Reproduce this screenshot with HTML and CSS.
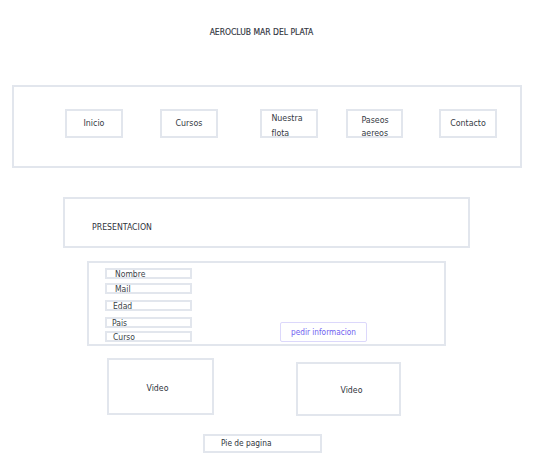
FILE: index.html
```html
<!DOCTYPE html>
<html lang="es">
<head>
<meta charset="utf-8">
<title>Aeroclub Mar del Plata</title>
<link rel="stylesheet" href="styles.css">
</head>
<body>
  <h1 class="title">AEROCLUB MAR DEL PLATA</h1>

  <nav class="nav">
    <a class="nav-item nav-item--inicio"><span>Inicio</span></a>
    <a class="nav-item nav-item--cursos"><span>Cursos</span></a>
    <a class="nav-item nav-item--flota nav-item--multi"><span>Nuestra<br>flota</span></a>
    <a class="nav-item nav-item--paseos nav-item--multi"><span>Paseos<br>aereos</span></a>
    <a class="nav-item nav-item--contacto"><span>Contacto</span></a>
  </nav>

  <section class="presentation">PRESENTACION</section>

  <form class="form">
    <div class="fields">
      <div class="field field--nombre">Nombre</div>
      <div class="field field--mail">Mail</div>
      <div class="field field--edad">Edad</div>
      <div class="field field--pais">Pais</div>
      <div class="field field--curso">Curso</div>
    </div>
    <button type="button" class="btn">pedir informacion</button>
  </form>

  <div class="videos">
    <div class="video video--one">Video</div>
    <div class="video video--two">Video</div>
  </div>

  <footer class="footer">Pie de pagina</footer>
</body>
</html>
```

FILE: styles.css
```css
* {
  box-sizing: border-box;
}

body {
  margin: 0;
  font-family: "DejaVu Sans Condensed", "DejaVu Sans", sans-serif;
  font-stretch: condensed;
  color: #2f343d;
  background: #ffffff;
}

.title {
  margin: 0;
  padding: 27px 17px 0 0;
  font-size: 8.5px;
  line-height: 10px;
  font-weight: 400;
  text-align: center;
  -webkit-text-stroke: 0.15px #2f343d;
}

.nav {
  display: flex;
  align-items: flex-start;
  width: 510px;
  height: 83px;
  margin: 48px 0 0 12px;
  padding: 22px 0 0 51px;
  border: 2px solid #e2e6ed;
}

.nav-item {
  display: flex;
  align-items: center;
  justify-content: center;
  width: 58px;
  height: 29px;
  border: 2px solid #e2e6ed;
  font-size: 8.8px;
  line-height: 11px;
  color: #353a44;
}

.nav-item--multi {
  align-items: flex-start;
}

.nav-item--multi span {
  text-align: left;
}

.nav-item--cursos { margin-left: 37px; }
.nav-item--flota { margin-left: 42px; }
.nav-item--flota span { line-height: 15px; margin-right: 4px; }
.nav-item--paseos { margin-left: 28px; width: 57px; }
.nav-item--paseos span { line-height: 13px; padding-top: 3px; margin-left: 1px; }
.nav-item--contacto { margin-left: 36px; }

.presentation {
  width: 407px;
  height: 51px;
  margin: 29px 0 0 63px;
  padding: 23px 0 0 27px;
  border: 2px solid #e2e6ed;
  font-size: 8.7px;
  line-height: 10px;
}

.form {
  display: flex;
  align-items: flex-end;
  gap: 88px;
  width: 359px;
  height: 85px;
  margin: 13px 0 0 87px;
  padding: 0 0 2px 16px;
  border: 2px solid #e2e6ed;
}

.fields {
  display: flex;
  flex-direction: column;
}

.field {
  width: 87px;
  height: 11px;
  border: 2px solid #e2e6ed;
  font-size: 8.5px;
  line-height: 8px;
  color: #3a3f48;
  white-space: nowrap;
}

.field--nombre { padding-left: 8px; }
.field--mail { margin-top: 4px; padding-left: 8px; }
.field--edad { margin-top: 6px; padding-left: 6px; }
.field--pais { margin-top: 6px; padding-left: 5px; }
.field--curso { margin-top: 3px; padding-left: 6px; }

.btn {
  width: 87px;
  height: 20px;
  padding: 0;
  border: 1.5px solid #dcd8fb;
  border-radius: 2px;
  background: #ffffff;
  font-family: "DejaVu Sans Condensed", "DejaVu Sans", sans-serif;
  font-stretch: condensed;
  font-size: 8.2px;
  color: #6f61f0;
}

.videos {
  display: flex;
  align-items: flex-start;
  gap: 82px;
  margin: 12px 0 0 107px;
}

.video {
  display: flex;
  align-items: center;
  justify-content: center;
  border: 2px solid #e2e6ed;
  font-size: 8.7px;
}

.video--one {
  width: 107px;
  height: 57px;
  padding-right: 6px;
  padding-top: 2px;
}

.video--two {
  width: 105px;
  height: 54px;
  margin-top: 4px;
  padding-left: 6px;
  padding-top: 2px;
}

.footer {
  width: 119px;
  height: 19px;
  margin: 18px 0 0 203px;
  padding-left: 16px;
  border: 2px solid #e2e6ed;
  font-size: 8.3px;
  line-height: 15px;
}
```
